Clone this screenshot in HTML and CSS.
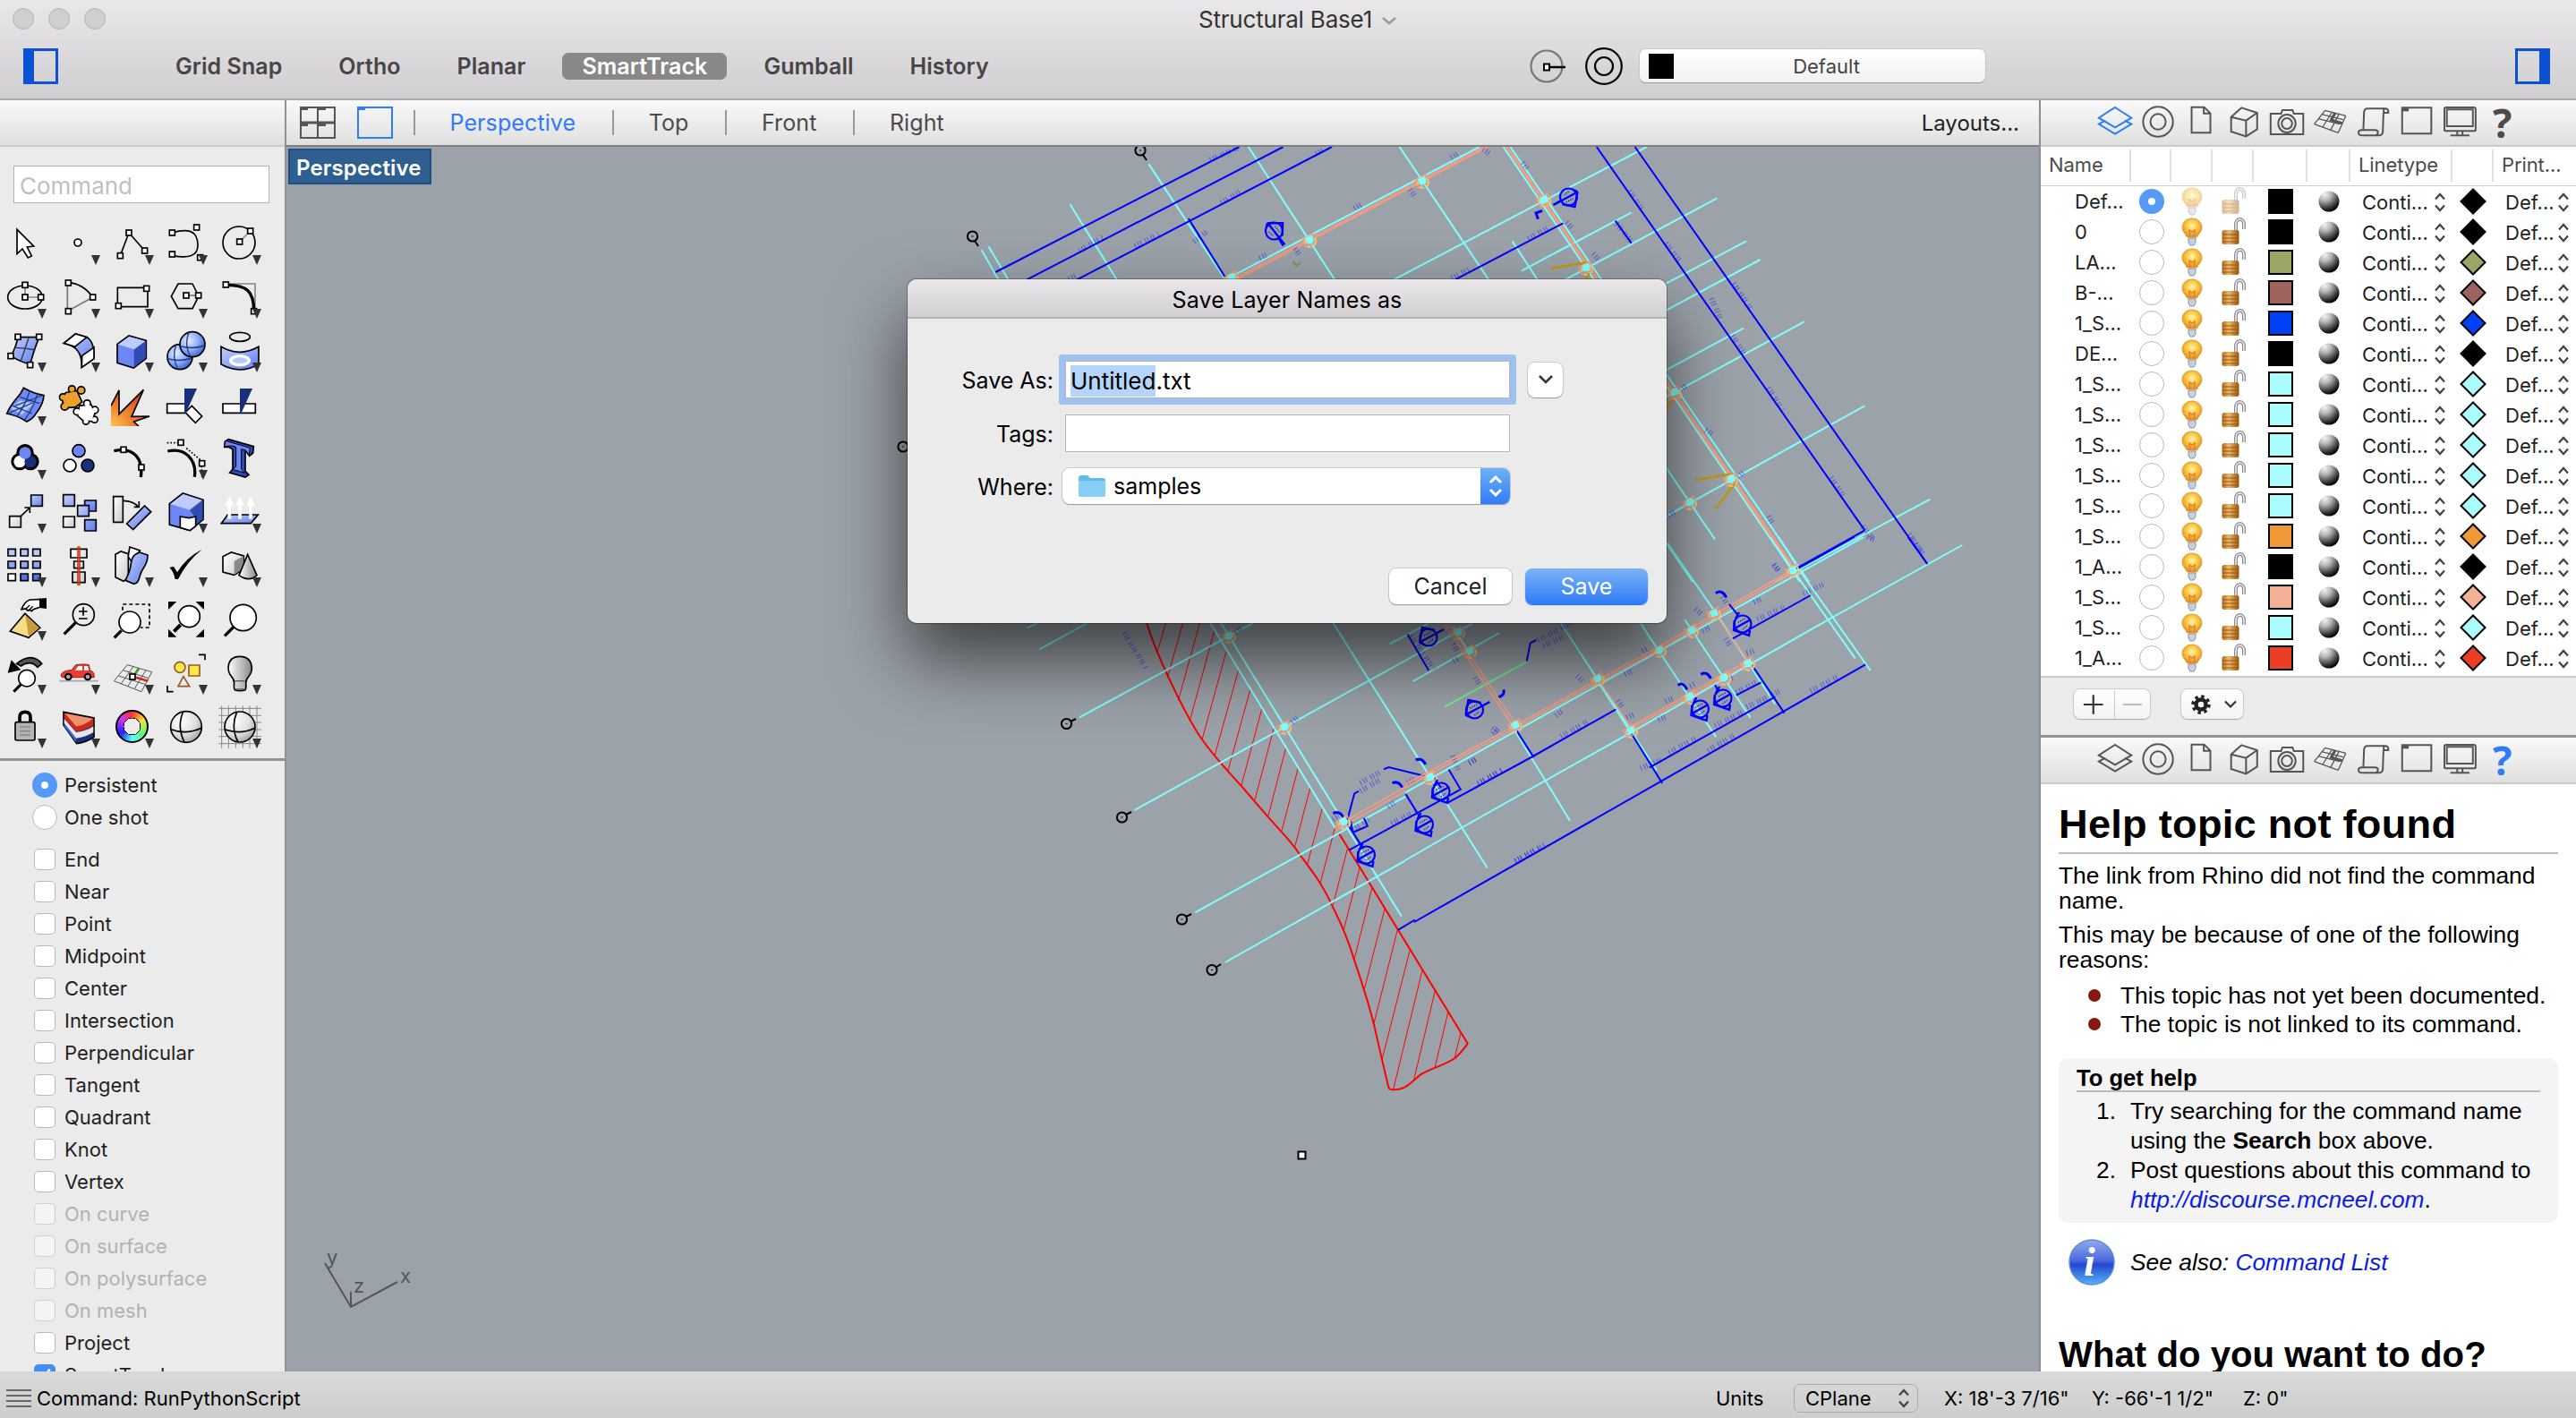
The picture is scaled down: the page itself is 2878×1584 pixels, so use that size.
FILE: index.html
```html
<!DOCTYPE html>
<html lang="en">
<head>
<meta charset="utf-8">
<title>Structural Base1</title>
<link rel="stylesheet" href="styles.css">
</head>
<body>
<svg class="defs" aria-hidden="true">
  <defs>
    <linearGradient id="gb" x1="0" y1="0" x2="1" y2="1"><stop offset="0" stop-color="#c3cffb"/><stop offset="1" stop-color="#5f7df0"/></linearGradient>
    <linearGradient id="gw" x1="0" y1="0" x2="1" y2="1"><stop offset="0" stop-color="#fff"/><stop offset="1" stop-color="#ccc"/></linearGradient>
    <linearGradient id="gd" x1="0" y1="0" x2="1" y2="0"><stop offset="0" stop-color="#fff"/><stop offset="1" stop-color="#888"/></linearGradient>
    <radialGradient id="sb" cx=".35" cy=".35" r=".75"><stop offset="0" stop-color="#e6eeff"/><stop offset=".5" stop-color="#8fb0fa"/><stop offset="1" stop-color="#3558c8"/></radialGradient>
    <radialGradient id="sg" cx=".35" cy=".3" r=".8"><stop offset="0" stop-color="#fff"/><stop offset=".6" stop-color="#ddd"/><stop offset="1" stop-color="#999"/></radialGradient>
    <radialGradient id="fire" cx="0" cy="1" r="1.1"><stop offset="0" stop-color="#fbc64a"/><stop offset=".5" stop-color="#f08232"/><stop offset="1" stop-color="#dc4a20"/></radialGradient>
    <radialGradient id="bulbg" cx=".5" cy=".4" r=".6"><stop offset="0" stop-color="#fff6b0"/><stop offset=".5" stop-color="#fbc840"/><stop offset="1" stop-color="#e08a20"/></radialGradient>
    <linearGradient id="lockg" x1="0" y1="0" x2="1" y2="0"><stop offset="0" stop-color="#b06a18"/><stop offset=".4" stop-color="#eebb6c"/><stop offset="1" stop-color="#9a5408"/></linearGradient>
    <radialGradient id="ballg" cx=".3" cy=".15" r=".9"><stop offset="0" stop-color="#f4f4f4"/><stop offset=".35" stop-color="#b4b4b4"/><stop offset=".7" stop-color="#4a4a4a"/><stop offset=".95" stop-color="#050505"/></radialGradient>
    <linearGradient id="infog" x1="0" y1="0" x2="0" y2="1"><stop offset="0" stop-color="#93a8ee"/><stop offset=".45" stop-color="#4c6ce0"/><stop offset=".55" stop-color="#2446d0"/><stop offset="1" stop-color="#55b4f6"/></linearGradient>
  </defs>
  <symbol id="n" overflow="visible"><rect x="-9" y="-9" width="18" height="18" fill="#fff" stroke="#000" stroke-width="5"/></symbol>
  <symbol id="bulb" viewBox="0 0 28 32"><path d="M14 1C7 1 3 6 3 11c0 5 4 7 5.500 11h11C21 18 25 16 25 11 25 6 21 1 14 1z" fill="url(#bulbg)" stroke="#e0a040"/><path d="M12 22l-1-8 3 2 3-2-1 8" fill="none" stroke="#e08030" stroke-width="1.500"/><path d="M10 23h8v5l-2 3h-4l-2-3z" fill="#c9d0da" stroke="#8a93a2"/></symbol>
  <symbol id="lock" viewBox="0 0 28 34"><path d="M17 17V9c0-8 9-8 9 0v5" fill="none" stroke="#8d8d8d" stroke-width="4"/><path d="M17 17V9c0-8 9-8 9 0v5" fill="none" stroke="#f2f2f2" stroke-width="1.500"/><rect x="1.500" y="15" width="19" height="16" rx="2.500" fill="url(#lockg)"/><path d="M2 20h18M2 24h18M2 28h18" stroke="#99560f" stroke-width="1"/></symbol>
  <symbol id="ball" viewBox="0 0 24 24"><circle cx="12" cy="12" r="11.500" fill="url(#ballg)"/></symbol>
  <symbol id="step" viewBox="0 0 14 22"><path d="M2 7.500L7 2l5 5.500M2 14.500L7 20l5-5.500" fill="none" stroke="#444" stroke-width="2.200"/></symbol>
  <symbol id="dia" viewBox="0 0 30 30"><path d="M15 1.500L28.500 15 15 28.500 1.500 15z" fill="var(--c)" stroke="#000" stroke-width="2"/></symbol>
  <symbol id="t-layers" viewBox="178 49 124 120" preserveAspectRatio="none"><path d="M240 61l47 35-47 32-47-32zM212 105l-19 12 47 33 47-33-19-12"/></symbol>
  <symbol id="t-mat" viewBox="302 49 124 120" preserveAspectRatio="none"><ellipse cx="364" cy="109" rx="43" ry="50"/><ellipse cx="364" cy="109" rx="22" ry="26"/></symbol>
  <symbol id="t-doc" viewBox="428 49 124 120" preserveAspectRatio="none"><path d="M463 60h36l18 21v65h-54zM498 60v21h19"/></symbol>
  <symbol id="t-cube" viewBox="547 49 124 120" preserveAspectRatio="none"><path d="M602 62l45 17v55l-32 24-43-16V93zM572 93l43 12 32-26M615 105v53"/></symbol>
  <symbol id="t-cam" viewBox="672 49 124 120" preserveAspectRatio="none"><path d="M687 82h30l4-12h29l4 12h27v69h-94z"/><ellipse cx="734" cy="115" rx="25" ry="30"/><ellipse cx="734" cy="115" rx="15" ry="18"/></symbol>
  <symbol id="t-grid" viewBox="800 49 124 120" preserveAspectRatio="none"><path stroke-width="1.300" d="M848 71l60 18M838 84l62 18M828 99l62 18M817 117l69 29M848 71l-31 46M868 77l-27 50M888 83l-24 54M908 89l-22 57"/><path stroke-width="3.200" d="M877 80l-11 23 31 11"/></symbol>
  <symbol id="t-scroll" viewBox="926 49 124 120" preserveAspectRatio="none"><path d="M958 137l2-60q1-12 10-12h52q9 1 8 14h-13q-2-10 2-13M1016 79l-2 66q-2 10-12 10h-46q-12 0-12-9t10-9h38q8 0 8 8t-6 10"/></symbol>
  <symbol id="t-win" viewBox="1045 49 124 120" preserveAspectRatio="none"><path d="M1065 62h84v87h-84z"/><path stroke-width="4" d="M1066 68h18"/></symbol>
  <symbol id="t-mon" viewBox="1170 49 124 120" preserveAspectRatio="none"><rect x="1188" y="61" width="90" height="79" rx="5"/><path d="M1195 68h75v56h-75zM1225 141v12M1240 141v12M1205 155h55"/></symbol>
  <symbol id="mark" overflow="visible"><circle r="9.500" fill="none" stroke="#00f" stroke-width="2.200"/><path d="M-10 6L-7-11 7-8M-9 5L17-9M-10 6l5 2" fill="none" stroke="#00f" stroke-width="2.400"/><path d="M-5-2L3-6M0 6l5-4" stroke="#00f" stroke-width="1.500" stroke-dasharray="1 1.500"/></symbol>
  <symbol id="markd" overflow="visible"><circle r="9.500" fill="none" stroke="#00f" stroke-width="2.200"/><path d="M-9-4L-10 7 7 13 8 7M-9 5L9-5M-8-6L-4-13" fill="none" stroke="#00f" stroke-width="2.400"/><path d="M-5-2L3-6M0 6l5-4" stroke="#00f" stroke-width="1.500" stroke-dasharray="1 1.500"/></symbol>
  <symbol id="bub" overflow="visible"><circle r="5.600" fill="none" stroke="#000" stroke-width="2"/><path d="M-1 0h2" stroke="#000"/></symbol>
  <symbol id="col" overflow="visible"><path d="M-8 0L4-7 8 2-4 8z" fill="none" stroke="#f99b7d" stroke-width="1.500"/><circle cx="1" cy="2" r="6" fill="none" stroke="#f0d070" stroke-width="1.500" stroke-dasharray="5 3"/><path d="M-5-2L3-5 5 2-2 5z" fill="#80ffff"/></symbol>
</svg>

<header class="titlebar">
  <div class="title-row">
    <div class="lights"><i></i><i></i><i></i></div>
    <div class="title">Structural Base1<svg width="18" height="10" viewBox="0 0 18 10"><path d="M2 2l7 6 7-6" fill="none" stroke="#999" stroke-width="2.500"/></svg></div>
  </div>
  <div class="tool-row">
    <i class="side-ico at-left"></i>
    <nav class="modes"><span>Grid Snap</span><span>Ortho</span><span>Planar</span><span class="on">SmartTrack</span><span>Gumball</span><span>History</span></nav>
    <div class="layer-pick">
      <svg width="42" height="42" viewBox="0 0 42 42" fill="none"><circle cx="19" cy="21" r="17.500" stroke="#777" stroke-width="2.200"/><path d="M22 22h18" stroke="#000" stroke-width="2.500"/><rect x="16" y="18.500" width="6" height="7" fill="#fff" stroke="#000" stroke-width="2"/></svg>
      <svg width="42" height="42" viewBox="0 0 42 42" fill="none" stroke="#000" stroke-width="2.200"><circle cx="21" cy="21" r="19.800"/><circle cx="21" cy="21" r="10"/></svg>
      <div class="pick"><i></i><span>Default</span></div>
    </div>
    <i class="side-ico at-right"></i>
  </div>
</header>

<main>
  <aside class="panel-left">
    <div class="strip"></div>
    <div class="cmd">Command</div>
    <div class="tools">
      <div class="tool"><svg viewBox="12 264 144 144"><path fill="#fff" d="M57 289v82l18-17 19 30 12-6-15-30 22-3z"/></svg></div>
      <div class="tool m"><svg viewBox="192 264 144 144"><circle cx="261" cy="333" r="12" fill="#fff"/></svg></div>
      <div class="tool m"><svg viewBox="372 264 144 144"><path d="M403 377l29-77 53 60"/><use href="#n" x="403" y="377"/><use href="#n" x="432" y="300"/><use href="#n" x="485" y="360"/></svg></div>
      <div class="tool m"><svg viewBox="552 264 144 144"><path d="M577 300c50-15 86-10 86 42 0 35-30 46-86 34"/><use href="#n" x="577" y="300"/><use href="#n" x="659" y="282"/><use href="#n" x="577" y="372"/><use href="#n" x="671" y="383"/></svg></div>
      <div class="tool m"><svg viewBox="732 264 144 144"><circle cx="801" cy="333" r="54"/><path stroke="#888" d="M803 330l36-36"/><use href="#n" x="803" y="330"/><use href="#n" x="839" y="294"/></svg></div>

      <div class="tool m"><svg viewBox="12 444 144 144"><ellipse cx="84" cy="516" rx="58" ry="39"/><path stroke="#888" d="M84 475v41h53"/><use href="#n" x="84" y="475"/><use href="#n" x="84" y="516"/><use href="#n" x="137" y="516"/></svg></div>
      <div class="tool m"><svg viewBox="192 444 144 144"><path stroke="#777" d="M226 468v95l85-47"/><path d="M229 467q50 4 82 49"/><use href="#n" x="229" y="468"/><use href="#n" x="311" y="516"/><use href="#n" x="229" y="563"/></svg></div>
      <div class="tool m"><svg viewBox="372 444 144 144"><path d="M394 484h101v64H394z"/><use href="#n" x="491" y="487"/><use href="#n" x="397" y="545"/></svg></div>
      <div class="tool m"><svg viewBox="552 444 144 144"><path d="M597 471h48l21 42-21 41h-48l-23-41z"/><path stroke="#777" d="M624 510h40"/><use href="#n" x="624" y="510"/><use href="#n" x="665" y="510"/></svg></div>
      <div class="tool m"><svg viewBox="732 444 144 144"><path stroke="#888" d="M757 471h98v92"/><path stroke-width="10" d="M757 475c70 0 94 20 94 88"/><use href="#n" x="757" y="474"/><use href="#n" x="851" y="563"/></svg></div>

      <div class="tool m"><svg viewBox="12 624 144 144"><path fill="url(#gb)" d="M60 650h71q-18 45-30 90-30-5-64-27 18-33 23-63z"/><path stroke="#334" stroke-width="4" d="M97 650q-14 40-27 80M50 685q35 0 68 8"/><use href="#n" x="60" y="649"/><use href="#n" x="131" y="649"/><use href="#n" x="36" y="713"/><use href="#n" x="101" y="743"/></svg></div>
      <div class="tool m"><svg viewBox="192 624 144 144"><path fill="url(#gb)" d="M214 670l39-31 38 11q26 14 24 72l-41 29q3-70-60-81z"/><path fill="#fff" d="M214 670l39-31 38 11-40 32zM275 712l40-28v38l-41 29z"/></svg></div>
      <div class="tool m"><svg viewBox="372 624 144 144"><path fill="#6b87f5" d="M393 673l39-28 58 16v60l-42 32-55-17z"/><path stroke="none" fill="#bfcbfb" d="M396 674l37-26 54 15-38 28z"/><path stroke="none" fill="#2f4cb4" d="M449 692l39-29v56l-39 31z"/></svg></div>
      <div class="tool m"><svg viewBox="552 624 144 144"><circle cx="603" cy="716" r="42" fill="url(#sb)"/><path stroke="#223a80" stroke-width="4" d="M590 676q-14 40 5 80M562 722q40 12 80-2"/><circle cx="645" cy="674" r="42" fill="url(#sb)"/><path stroke="#223a80" stroke-width="4" d="M633 634q-16 40 4 80M604 680q40 12 82-2"/></svg></div>
      <div class="tool m"><svg viewBox="732 624 144 144"><ellipse cx="804" cy="649" rx="34" ry="15"/><path fill="url(#gb)" d="M741 682q62 36 126 0v58q-64 38-126 0z"/><ellipse cx="804" cy="728" rx="31" ry="15" fill="#b9c8fb" stroke="#fff" stroke-width="10"/></svg></div>

      <div class="tool m"><svg viewBox="12 804 144 144"><path fill="#6f8cf5" d="M79 820q34 20 68 25-2 30-26 60-10 18-31 28-34-22-67-27 8-20 30-48 18-18 26-38z"/><path stroke="none" fill="#b4c5fb" d="M66 862l48 10-40 38-38-22z"/><path stroke="#233a80" stroke-width="4" d="M66 850l66 22M42 880l66 26M100 828q-14 50-44 88M126 838q-14 50-44 90M50 880l90-34M30 904l80-34"/></svg></div>
      <div class="tool"><svg viewBox="192 804 144 144">
        <g stroke-width="10"><path d="M222 838l34-6 16 34-20 16-34 2-8-28z"/><circle cx="241" cy="824" r="9"/><circle cx="272" cy="828" r="10"/><circle cx="211" cy="851" r="9"/><circle cx="217" cy="882" r="10"/></g>
        <g stroke="none" fill="#eda02c"><path d="M222 838l34-6 16 34-20 16-34 2-8-28z"/><circle cx="241" cy="824" r="9"/><circle cx="272" cy="828" r="10"/><circle cx="211" cy="851" r="9"/><circle cx="217" cy="882" r="10"/></g>
        <g stroke-width="10"><path d="M268 882l36-4 12 24-8 28-30-4-16-14z"/><circle cx="292" cy="872" r="9"/><circle cx="318" cy="894" r="9"/><circle cx="317" cy="926" r="8"/><circle cx="288" cy="932" r="8"/><circle cx="258" cy="899" r="9"/></g>
        <g stroke="none" fill="#fff"><path d="M268 882l36-4 12 24-8 28-30-4-16-14z"/><circle cx="292" cy="872" r="9"/><circle cx="318" cy="894" r="9"/><circle cx="317" cy="926" r="8"/><circle cx="288" cy="932" r="8"/><circle cx="258" cy="899" r="9"/></g></svg></div>
      <div class="tool"><svg viewBox="372 804 144 144"><path fill="url(#fire)" stroke="none" d="M372 948v-70l27-50v80l82-82-40 90 60-1-50 19 14 14z"/><path d="M372 880l27-52v80l82-82-40 90 60-1-52 18 16 16"/></svg></div>
      <div class="tool"><svg viewBox="552 804 144 144"><path fill="#fff" d="M560 873h62v31h-62zM643 880l34 35-22 22-34-35z"/><path fill="#18307c" stroke="none" d="M618 822h42l-38 84h-4z"/></svg></div>
      <div class="tool"><svg viewBox="732 804 144 144"><path fill="#fff" d="M747 873h109v31H747z"/><path fill="#18307c" stroke="none" d="M804 822h42l-38 84h-4z"/></svg></div>

      <div class="tool m"><svg viewBox="12 -6 144 144"><g stroke-width="14"><circle cx="84" cy="47" r="22"/><circle cx="66" cy="77" r="22"/><circle cx="102" cy="77" r="22"/></g><g stroke="none"><circle cx="66" cy="77" r="20" fill="#fff"/><circle cx="102" cy="77" r="20" fill="#18307c"/><circle cx="84" cy="48" r="20" fill="#6b87f5"/></g></svg></div>
      <div class="tool"><svg viewBox="192 -6 144 144"><circle cx="264" cy="41" r="21" fill="#6b87f5"/><circle cx="234" cy="90" r="21" fill="#fff"/><circle cx="294" cy="90" r="21" fill="#18307c"/></svg></div>
      <div class="tool"><svg viewBox="372 -6 144 144"><path stroke-width="10" d="M382 41c70-15 98 30 90 88"/><use href="#n" x="414" y="37"/><use href="#n" x="474" y="96"/></svg></div>
      <div class="tool m"><svg viewBox="552 -6 144 144"><path stroke-width="10" d="M562 42c60-14 98 30 90 86"/><path stroke-dasharray="5 6" d="M560 14h35M625 32l50 42M676 92v36"/><use href="#n" x="606" y="13"/><use href="#n" x="677" y="83"/></svg></div>
      <div class="tool"><svg viewBox="732 -6 144 144"><path fill="#2f4cb4" d="M752 28l2-18 12-8 84 24-2 22-12 10-10-14-4-1v66l12 12-12 8-52-15 10-12V36l-14-8z"/><path fill="#6b87f5" stroke-width="3" d="M752 26l4-19 82 24-3 24-12-16-14-4v68l12 12-42-12 12-9V28l-14-4z"/></svg></div>

      <div class="tool m"><svg viewBox="12 174 144 144"><path fill="url(#gw)" d="M32 260h38v37H32z"/><path fill="url(#gb)" d="M104 189h38v37h-38z"/><path d="M70 260l30-29M82 231h18v18"/></svg></div>
      <div class="tool"><svg viewBox="192 174 144 144"><path fill="url(#gb)" d="M212 188h38v38h-38zM284 207h38v36h-38z"/><path fill="url(#gb)" d="M260 224h38v36h-38zM284 272h38v37h-38z"/><path fill="url(#gw)" d="M212 261h38v36h-38z"/></svg></div>
      <div class="tool"><svg viewBox="372 174 144 144"><path fill="url(#gw)" d="M380 194h32v86h-32z"/><path fill="url(#gb)" d="M485 225l21 20-60 60-21-20z"/><path d="M412 208q36 0 53 22M449 229h17v-19"/></svg></div>
      <div class="tool m"><svg viewBox="552 174 144 144"><path fill="#6b87f5" d="M568 218l45-35 68 22v66l-44 37-69-20z"/><path stroke="none" fill="#bfcbfb" d="M571 219l43-33 63 20-42 33z"/><path stroke="none" fill="#2f4cb4" d="M636 240l43-34v63l-23 18v-22z"/><path fill="#fff" d="M604 261l30 5 22-5v32l-20 15-32-10z"/></svg></div>
      <div class="tool m"><svg viewBox="732 174 144 144"><path fill="url(#gb)" d="M763 255h102l-24 29H742z"/><path stroke="#fff" stroke-width="11" d="M769 269v-50M804 269v-50M840 269v-50"/><path stroke="none" fill="#fff" d="M754 224l15-31 15 31zM789 224l15-31 15 31zM825 224l15-31 15 31z"/></svg></div>

      <div class="tool m"><svg viewBox="12 354 144 144"><path fill="#b9c6fb" d="M27 370h25v23H27zM69 370h25v23H69zM110 370h25v23h-25z"/><path fill="#8fa6f8" d="M27 411h25v23H27zM69 411h25v23H69zM110 411h25v23h-25z"/><path fill="#fff" d="M27 453h25v23H27z"/><path fill="#5573e8" d="M69 453h25v23H69zM110 453h25v23h-25z"/></svg></div>
      <div class="tool m"><svg viewBox="192 354 144 144"><path fill="url(#gw)" d="M237 370h54v29h-54zM248 411h32v23h-32zM243 447h42v35h-42z"/><path stroke="#c8341f" stroke-opacity=".8" stroke-width="12" d="M264 361v131"/></svg></div>
      <div class="tool m"><svg viewBox="372 354 144 144"><path fill="#fff" d="M435 363l34 12-26 40-14-20z"/><path fill="url(#gw)" d="M387 388l18-10 25 8v80l-16 12-27-14z"/><path fill="url(#gb)" d="M468 381l27 9c0 40-20 40-26 70-6 24-12 24-20 27l-29-12c10-20 16-30 18-50 4-30 10-36 30-44z"/></svg></div>
      <div class="tool m"><svg viewBox="552 354 144 144"><path fill="#000" stroke="none" d="M568 432l14-4 12 20q30-50 83-77-50 40-80 100h-10q-6-28-19-39z"/></svg></div>
      <div class="tool m"><svg viewBox="732 354 144 144"><path fill="url(#gw)" d="M747 395l28-14 42 12v44l-32 20-38-10z"/><path stroke="none" fill="#8a8a8a" d="M785 410l30-16v42l-30 20z"/><path fill="url(#gd)" d="M830 388l31 70q-26 24-60 0z"/></svg></div>

      <div class="tool m"><svg viewBox="12 534 144 144"><path fill="#f6dc84" d="M84 586l50 48-38 33-62-22z"/><path fill="#c79a3a" stroke="none" d="M85 590l47 44-36 30z"/><path fill="#fff" d="M72 572q10-26 28-32l36-2v26l-24 8-6 6-6-4-8 2-4-6z"/><path stroke-width="4" d="M84 572l16-14M96 576l14-14"/><path fill="#000" stroke="none" d="M132 536l24-2v36l-24-3z"/></svg></div>
      <div class="tool"><svg viewBox="192 534 144 144"><path stroke-width="10" d="M215 655l38-38"/><circle cx="280" cy="590" r="36"/><path d="M264 579h29M279 565v28M264 603h29"/></svg></div>
      <div class="tool"><svg viewBox="372 534 144 144"><path stroke-dasharray="12 9" d="M411 575v-20h90v78h-30"/><path stroke-width="10" d="M383 667l24-24"/><circle cx="435" cy="615" r="36" fill="#fff"/></svg></div>
      <div class="tool"><svg viewBox="552 534 144 144"><path stroke-width="12" d="M583 646l22-22"/><circle cx="634" cy="596" r="36" fill="#fff"/><path fill="#000" stroke="none" d="M564 546h28l-28 27zM684 546h-28l28 27zM564 665h28l-28-27zM684 665h-28l28-27z"/></svg></div>
      <div class="tool"><svg viewBox="732 534 144 144"><path stroke-width="10" d="M753 661l32-32"/><circle cx="815" cy="600" r="44" fill="#fff"/></svg></div>

      <div class="tool m"><svg viewBox="12 714 144 144"><path stroke-width="9" d="M46 848l24-24"/><circle cx="90" cy="803" r="28" fill="#fff"/><path fill="#555" d="M56 754q50-40 84 0l-14 12q-24-26-56-4z"/><path fill="#000" stroke="none" d="M38 742l-12 43 44-10z"/></svg></div>
      <div class="tool m"><svg viewBox="192 714 144 144"><path stroke="#aaa" d="M199 812h130"/><path fill="#e83c34" stroke="#a01a18" stroke-width="3" d="M206 788q10-12 34-12l14-18q30-4 44 0l4 20q14 0 14 22h-108q-6-4-2-12z"/><path fill="#fff" stroke="none" d="M252 776l10-14h14v14zM282 762h12l4 14h-16z"/><circle cx="229" cy="798" r="10" fill="#aaa" stroke-width="6"/><circle cx="294" cy="798" r="10" fill="#aaa" stroke-width="6"/></svg></div>
      <div class="tool m"><svg viewBox="372 714 144 144"><g stroke="#555" stroke-width="3"><path d="M427 758l82 24M412 776l84 26M397 795l88 28M382 812l92 36M427 758l-45 54M447 764l-42 58M468 770l-40 60M489 776l-38 62M509 782l-35 66"/></g><path stroke="#4a9a2a" stroke-width="8" d="M452 790l14-22"/><path stroke="#d02820" stroke-width="8" d="M456 800l40 12"/><use href="#n" x="444" y="798"/></svg></div>
      <div class="tool m"><svg viewBox="552 714 144 144"><path d="M666 724h21v18M561 828v20h20"/><g stroke="#9a5a20"><circle cx="603" cy="766" r="18" fill="#fde84a"/><path fill="#fde84a" d="M633 759h36v36h-36z"/><path d="M615 797l20 33h-38z"/></g></svg></div>
      <div class="tool m"><svg viewBox="732 714 144 144"><path fill="url(#gd)" d="M787 842q-4-6-2-22 0-14-10-24-10-12-10-28 2-38 39-38t40 38q0 16-10 28-10 10-10 24 2 16-2 22-18 6-35 0z"/><path stroke="#555" stroke-width="4" d="M786 812h34M790 840h28"/></svg></div>

      <div class="tool m"><svg viewBox="12 894 144 144"><path stroke-width="11" d="M66 952v-18q0-18 18-18t18 18v18"/><rect x="51" y="950" width="66" height="61" rx="5" fill="#b5b5b5"/><path stroke="#888" d="M66 966h36M66 980h36M66 993h36"/></svg></div>
      <div class="tool m"><svg viewBox="192 894 144 144"><path fill="#1a2f80" d="M213 916l102 20v64q-26 18-58 22l-44-62z"/><path fill="#e6e6e6" stroke="none" d="M215 938l40 46q36-4 58-20v20q-24 16-58 20l-40-50z"/><path fill="#cc2a1a" stroke="none" d="M215 920l98 18v22q-24 18-58 22l-40-46z"/><path fill="#f0926c" stroke="none" d="M217 920l94 18q-26 22-56 26z"/><path fill="#3c66e0" stroke="none" d="M215 954v10l40 54v-14z"/></svg></div>
      <div class="tool m"><i class="wheel"></i></div>
      <div class="tool"><svg viewBox="552 894 144 144"><circle cx="624" cy="966" r="52" fill="url(#sg)"/><path d="M614 915q-22 50 4 102M573 974q50 20 102-4"/></svg></div>
      <div class="tool m"><svg viewBox="732 894 144 144"><path stroke="#888" stroke-width="3" d="M733 904h143M733 928h143M733 951h143M733 975h143M733 998h143M733 1022h143M743 895v142M766 895v142M790 895v142M814 895v142M837 895v142M861 895v142"/><circle cx="804" cy="966" r="51" fill="url(#sg)"/><path d="M794 916q-22 50 4 101M754 974q50 20 101-4"/></svg></div>
    </div>
    <div class="osnap">
      <label><i class="radio on"></i>Persistent</label>
      <label><i class="radio"></i>One shot</label>
      <div class="checks">
        <label><i class="box"></i>End</label><label><i class="box"></i>Near</label><label><i class="box"></i>Point</label><label><i class="box"></i>Midpoint</label><label><i class="box"></i>Center</label><label><i class="box"></i>Intersection</label><label><i class="box"></i>Perpendicular</label><label><i class="box"></i>Tangent</label><label><i class="box"></i>Quadrant</label><label><i class="box"></i>Knot</label><label><i class="box"></i>Vertex</label>
        <label class="off"><i class="box"></i>On curve</label><label class="off"><i class="box"></i>On surface</label><label class="off"><i class="box"></i>On polysurface</label><label class="off"><i class="box"></i>On mesh</label>
        <label><i class="box"></i>Project</label><label><i class="box checked"><svg viewBox="0 0 24 24"><path d="M6 13l4 5 8-13" fill="none" stroke="#fff" stroke-width="3"/></svg></i>SmartTrack</label>
      </div>
    </div>
  </aside>

  <section class="center">
    <div class="strip views">
      <svg class="v4" width="40" height="36" viewBox="0 0 40 36" fill="none" stroke="#555" stroke-width="2"><path d="M1 1h38v34H1zM20 1v34"/><path stroke-width="3" d="M1 18h38"/><path stroke-width="4" d="M1 2h8M20 2h9M1 20h8M20 20h9"/></svg>
      <svg class="v1" width="40" height="36" viewBox="0 0 40 36" fill="none" stroke="#2f7cf6" stroke-width="2"><path d="M1 1h38v34H1z"/><path stroke-width="4" d="M1 2h8"/></svg>
      <span class="on">Perspective</span><span>Top</span><span>Front</span><span>Right</span>
      <b>Layouts...</b>
    </div>
    <div class="viewport">
      <svg class="drawing" viewBox="320 164 1958 1368">
        <g transform="translate(980 150) scale(.77808 .33333)">
          <path class="cy" d="M500 487L865 42M742 487L1105 42M925 458L1083 262M988 487L1206 214M1133 500L1248 358M1133 590L1268 420M1133 790L1244 650M1133 880L1331 628M1133 1280L1418 910M1290 1500L1512 1223M390 100L500 487M533 42L657 487M277 235L344 487M150 388L174 487M160 376L188 487M750 42L878 487M912 358L948 487M899 42L1325 1500M909 42L1338 1500M1133 1118L1203 1358M1133 1370L1171 1500"/>
          <path class="or" d="M506 492L872 42M512 492L877 42M903 42L1316 1460M905 42L1319 1460M1290 1500L1316 1467"/>
          <path class="bl" d="M170 462L520 42M215 487L583 42M287 487L653 42M830 487L985 298M1320 1455L1418 1327M1033 42L1418 1327M1088 42L1508 1440M447 282L500 480M1060 290L1083 365M576 348L583 374M971 236L982 222"/>
          <path class="bk" d="M955 256L946 264 949 284"/>
          <path class="tx" d="M478 85L518 46M494 230L522 190M290 390L324 345M370 375L404 335M630 65L645 48M824 78L836 62M870 50L882 68M765 185L772 208M685 248L698 232M549 415L562 400M600 382L608 408M455 360L474 325M927 95L935 118M935 350L965 312M1080 190L1098 250M1133 365L1154 430M1198 550L1213 630M1228 675L1245 735M1280 850L1300 925M1230 500L1256 590M1370 1150L1388 1215M1482 1340L1502 1410M1190 990L1202 1010M1280 1280L1288 1310M1415 1315L1432 1360M990 295L1000 320M1028 400L1036 420M1136 1280L1148 1260M1288 1440L1296 1475M1062 300L1083 360M825 482L850 452M275 485L288 470M1236 1150L1247 1125M1153 860L1162 840"/>
          <path class="go" d="M968 450L1018 430M1018 487L1022 465M1175 1158L1228 1138M1235 1160L1204 1255M1148 870L1133 920"/>
          <path class="ol" d="M597 426l5 14 6-10"/>
        </g>
        <g transform="translate(1100 680) scale(.39541 .35714)">
          <path class="ht" d="M512 45L488 135M560 45L517 215M608 45L547 288M649 70L580 350M683 133L615 408M717 193L650 460M750 255L687 510M783 315L725 555M817 375L763 600M851 437L801 650M886 498L840 693M920 560L876 748M955 622L912 800M990 685L948 860M1025 752L985 925M1060 810L1015 1003M1095 872L1045 1095M1131 937L1073 1190M1167 1003L1100 1297M1202 1067L1123 1410M1237 1130L1155 1503M1273 1195L1213 1473M1310 1260L1272 1437M1346 1325L1328 1405"/>
          <path class="rd" d="M458 45C480 120 505 180 520 215 545 275 570 330 600 385 640 455 690 510 730 560L800 650C840 700 865 725 890 768 940 840 960 875 985 935 1010 990 1030 1045 1045 1100 1065 1165 1085 1235 1100 1300L1125 1420 1141 1495Q1142 1504 1152 1504C1195 1506 1205 1478 1235 1455 1270 1433 1300 1428 1330 1405 1350 1385 1355 1375 1365 1360L1000 700"/>
          <path class="cy" d="M120 60L150 45M155 127L290 45M268 340L758 45M424 630L1380 45M595 950L1190 587M680 1106L1190 787M1210 227L1455 75M1145 110L1255 45M638 45L990 685M668 45L1178 962M985 45L1420 810"/>
          <path class="or" d="M990 682L1190 557M997 690L1190 569M990 682L997 695"/>
          <path class="gr" d="M1300 307L1530 167"/>
          <path class="bl" d="M1030 755L1345 565 1310 500M1195 80L1255 193M1025 660L1045 578 1057 571M1128 502L1142 496 1250 525M1190 580L1232 655M1025 672L1070 750M1168 1005L1216 973M1040 700L1082 680 1072 655M1035 665L1040 700M1265 520L1290 560"/>
          <path class="bk" d="M1452 277q20-8 14-24M985 640q18-10 28 12M1152 545q18-8 28 14M1218 473q18-8 28 14"/>
          <path class="tx" d="M395 75L455 185M708 75L730 55M868 355L888 335M1062 545L1118 510M1062 570L1118 535M1205 85L1270 190M1325 110L1335 130M1385 215L1400 240M1435 390L1458 365M1322 460L1340 505M1370 485L1395 465M1395 548L1462 503M1150 672L1220 632M1140 620L1162 602M1195 545L1220 530M1500 790L1568 748M985 660L1010 640M1040 690L1085 660M1325 165L1340 155"/>
        </g>
        <g transform="translate(1580 600) scale(.39541 .33333)">
          <path class="cy" d="M-25 856L1270 0M-25 1083L137 972 612 655 943 430 1180 270 1548 27M285 650L440 950M415 290L520 480 685 782M522 490L612 655M640 290L853 670M765 277L950 605M715 20L850 250 1020 560M1005 0L1070 110 1246 406M1030 0L1085 105 1289 447M110 300L160 400"/>
          <path class="or" d="M-25 828L285 632 520 477 690 368 1070 108M-25 839L285 641 520 486 690 378 1070 118M85 290L280 635M97 290L290 632M525 485L612 635 943 415 852 260M612 643L943 425M1015 0L1072 105"/>
          <path class="bl" d="M0 1290L698 818 1045 583 1275 427M665 772L1020 535M95 890L335 735 570 577M900 340L1120 195M1085 105L1243 0M1395 0L1450 90M612 655L701 825M955 430L1046 590M290 650L338 738M910 530L980 487M318 415L328 355 345 345M890 225L915 262M780 525L795 550M850 495L858 515"/>
          <path class="bk" d="M852 188q18-14 30 14M745 497q14-14 26 14M810 460q18-12 28 14"/>
          <path class="tx" d="M350 345L440 290M365 365L420 335M415 668L490 618M180 825L250 780M285 1085L370 1030M830 715L905 665M1120 515L1195 470M720 722L795 675M850 632L925 588M940 570L1035 515M970 275L1045 235M960 218L988 203M1100 190L1155 160M1015 95L1038 118M795 240L815 262M460 465L482 490M400 598L425 578M220 640L242 660M155 755L180 740M645 382L660 372M595 460L622 445M815 315L838 300M880 340L895 368M870 200L885 225M710 550L740 535M690 612L718 598M880 480L905 468M910 520L975 482M575 548L592 575M600 605L620 595M640 775L700 745M780 500L795 490M1280 0L1305 10M1405 5L1438 55M940 390L960 380"/>
        </g>
        <g><use href="#col" x="1373" y="710"/><use href="#col" x="1435" y="812"/><use href="#col" x="1501" y="918"/><use href="#col" x="1598" y="868"/><use href="#col" x="1693" y="810"/><use href="#col" x="1629" y="706"/><use href="#col" x="1642" y="727"/><use href="#col" x="1785" y="758"/><use href="#col" x="1854" y="726"/><use href="#col" x="1890" y="704"/><use href="#col" x="1915" y="685"/><use href="#col" x="2003" y="637"/><use href="#col" x="1953" y="741"/><use href="#col" x="1926" y="757"/><use href="#col" x="1888" y="778"/><use href="#col" x="1822" y="816"/><use href="#col" x="1589" y="202"/><use href="#col" x="1463" y="268"/><use href="#col" x="1376" y="310"/><use href="#col" x="1725" y="223"/><use href="#col" x="1772" y="299"/><use href="#col" x="1871" y="438"/><use href="#col" x="1934" y="535"/><use href="#col" x="1888" y="561"/></g>
        <g><use href="#mark" x="1596" y="712"/><use href="#mark" x="1647.500" y="793"/><use href="#markd" x="1610" y="884"/><use href="#markd" x="1591.500" y="921"/><use href="#markd" x="1526.500" y="955"/><use href="#markd" x="1899.500" y="792"/><use href="#markd" x="1925" y="780"/><use href="#markd" x="1947" y="697"/><use href="#mark" transform="translate(1423.500 258) rotate(80)"/><use href="#mark" transform="translate(1752.500 220) rotate(180)"/></g>
        <g><use href="#bub" x="1191.500" y="808.500"/><use href="#bub" x="1253.500" y="913"/><use href="#bub" x="1320.500" y="1027"/><use href="#bub" x="1354" y="1083.500"/><use href="#bub" x="1274" y="168"/><use href="#bub" x="1086.500" y="264"/><use href="#bub" x="1009" y="499"/></g>
        <path fill="none" stroke="#000" stroke-width="2" d="M1196 806l6-3M1258 910l6-3M1325 1024l6-3M1358 1081l6-4M1277 173l4 6M1089 269l4 6"/>
        <g fill="none" stroke="#555" stroke-width="2"><path d="M363 1411L392 1460 444 1432M392 1460v-17"/></g>
        <g class="ax"><text x="365" y="1412">y</text><text x="395" y="1444">z</text><text x="447" y="1433">x</text></g>
        <rect x="1450.500" y="1286.500" width="8" height="8" fill="#fff" stroke="#000" stroke-width="2"/>
      </svg>
      <div class="vp-label">Perspective</div>

      <div class="dialog">
        <div class="dlg-title">Save Layer Names as</div>
        <div class="dlg-form">
          <span>Save As:</span><div class="field focus"><mark>Untitled</mark>.txt</div>
          <div class="disclose"><svg width="18" height="12" viewBox="0 0 18 12"><path d="M2 2l7 7 7-7" fill="none" stroke="#333" stroke-width="2.500"/></svg></div>
          <span>Tags:</span><div class="field"></div><div></div>
          <span>Where:</span><div class="popup"><svg width="32" height="26" viewBox="0 0 32 26"><path d="M1 4q0-3 3-3h7l3 3h14q3 0 3 3v16q0 2-2 2H3q-2 0-2-2z" fill="#64b8ea"/><path d="M1 7h30v16q0 2-2 2H3q-2 0-2-2z" fill="#88cff6"/></svg>samples<i><svg width="18" height="26" viewBox="0 0 18 26"><path d="M3 9l6-6 6 6M3 17l6 6 6-6" fill="none" stroke="#fff" stroke-width="3"/></svg></i></div><div></div>
        </div>
        <div class="dlg-btns"><button>Cancel</button><button class="pri">Save</button></div>
      </div>
    </div>
  </section>

  <aside class="panel-right">
    <div class="strip tabs"><svg class="on"><use href="#t-layers"/></svg><svg><use href="#t-mat"/></svg><svg><use href="#t-doc"/></svg><svg><use href="#t-cube"/></svg><svg><use href="#t-cam"/></svg><svg><use href="#t-grid"/></svg><svg><use href="#t-scroll"/></svg><svg><use href="#t-win"/></svg><svg><use href="#t-mon"/></svg><b>?</b></div>
    <div class="thead"><span>Name</span><span></span><span></span><span></span><span></span><span></span><span>Linetype</span><span></span><span>Print...</span></div>
    <div class="rows">
      <div class="row first" style="--c:#000"><span>Def...</span><i class="radio on"></i><svg class="bulb"><use href="#bulb"/></svg><svg class="lock"><use href="#lock"/></svg><i class="sw"></i><svg class="ball"><use href="#ball"/></svg><em>Conti...<svg><use href="#step"/></svg></em><svg class="dia"><use href="#dia"/></svg><em>Def...<svg><use href="#step"/></svg></em></div>
      <div class="row" style="--c:#000"><span>0</span><i class="radio"></i><svg class="bulb"><use href="#bulb"/></svg><svg class="lock"><use href="#lock"/></svg><i class="sw"></i><svg class="ball"><use href="#ball"/></svg><em>Conti...<svg><use href="#step"/></svg></em><svg class="dia"><use href="#dia"/></svg><em>Def...<svg><use href="#step"/></svg></em></div>
      <div class="row" style="--c:#9ba565"><span>LA...</span><i class="radio"></i><svg class="bulb"><use href="#bulb"/></svg><svg class="lock"><use href="#lock"/></svg><i class="sw"></i><svg class="ball"><use href="#ball"/></svg><em>Conti...<svg><use href="#step"/></svg></em><svg class="dia"><use href="#dia"/></svg><em>Def...<svg><use href="#step"/></svg></em></div>
      <div class="row" style="--c:#9f635e"><span>B-...</span><i class="radio"></i><svg class="bulb"><use href="#bulb"/></svg><svg class="lock"><use href="#lock"/></svg><i class="sw"></i><svg class="ball"><use href="#ball"/></svg><em>Conti...<svg><use href="#step"/></svg></em><svg class="dia"><use href="#dia"/></svg><em>Def...<svg><use href="#step"/></svg></em></div>
      <div class="row" style="--c:#0041f5"><span>1_S...</span><i class="radio"></i><svg class="bulb"><use href="#bulb"/></svg><svg class="lock"><use href="#lock"/></svg><i class="sw"></i><svg class="ball"><use href="#ball"/></svg><em>Conti...<svg><use href="#step"/></svg></em><svg class="dia"><use href="#dia"/></svg><em>Def...<svg><use href="#step"/></svg></em></div>
      <div class="row" style="--c:#000"><span>DE...</span><i class="radio"></i><svg class="bulb"><use href="#bulb"/></svg><svg class="lock"><use href="#lock"/></svg><i class="sw"></i><svg class="ball"><use href="#ball"/></svg><em>Conti...<svg><use href="#step"/></svg></em><svg class="dia"><use href="#dia"/></svg><em>Def...<svg><use href="#step"/></svg></em></div>
      <div class="row" style="--c:#aafdff"><span>1_S...</span><i class="radio"></i><svg class="bulb"><use href="#bulb"/></svg><svg class="lock"><use href="#lock"/></svg><i class="sw"></i><svg class="ball"><use href="#ball"/></svg><em>Conti...<svg><use href="#step"/></svg></em><svg class="dia"><use href="#dia"/></svg><em>Def...<svg><use href="#step"/></svg></em></div>
      <div class="row" style="--c:#aafdff"><span>1_S...</span><i class="radio"></i><svg class="bulb"><use href="#bulb"/></svg><svg class="lock"><use href="#lock"/></svg><i class="sw"></i><svg class="ball"><use href="#ball"/></svg><em>Conti...<svg><use href="#step"/></svg></em><svg class="dia"><use href="#dia"/></svg><em>Def...<svg><use href="#step"/></svg></em></div>
      <div class="row" style="--c:#aafdff"><span>1_S...</span><i class="radio"></i><svg class="bulb"><use href="#bulb"/></svg><svg class="lock"><use href="#lock"/></svg><i class="sw"></i><svg class="ball"><use href="#ball"/></svg><em>Conti...<svg><use href="#step"/></svg></em><svg class="dia"><use href="#dia"/></svg><em>Def...<svg><use href="#step"/></svg></em></div>
      <div class="row" style="--c:#aafdff"><span>1_S...</span><i class="radio"></i><svg class="bulb"><use href="#bulb"/></svg><svg class="lock"><use href="#lock"/></svg><i class="sw"></i><svg class="ball"><use href="#ball"/></svg><em>Conti...<svg><use href="#step"/></svg></em><svg class="dia"><use href="#dia"/></svg><em>Def...<svg><use href="#step"/></svg></em></div>
      <div class="row" style="--c:#aafdff"><span>1_S...</span><i class="radio"></i><svg class="bulb"><use href="#bulb"/></svg><svg class="lock"><use href="#lock"/></svg><i class="sw"></i><svg class="ball"><use href="#ball"/></svg><em>Conti...<svg><use href="#step"/></svg></em><svg class="dia"><use href="#dia"/></svg><em>Def...<svg><use href="#step"/></svg></em></div>
      <div class="row" style="--c:#f09837"><span>1_S...</span><i class="radio"></i><svg class="bulb"><use href="#bulb"/></svg><svg class="lock"><use href="#lock"/></svg><i class="sw"></i><svg class="ball"><use href="#ball"/></svg><em>Conti...<svg><use href="#step"/></svg></em><svg class="dia"><use href="#dia"/></svg><em>Def...<svg><use href="#step"/></svg></em></div>
      <div class="row" style="--c:#000"><span>1_A...</span><i class="radio"></i><svg class="bulb"><use href="#bulb"/></svg><svg class="lock"><use href="#lock"/></svg><i class="sw"></i><svg class="ball"><use href="#ball"/></svg><em>Conti...<svg><use href="#step"/></svg></em><svg class="dia"><use href="#dia"/></svg><em>Def...<svg><use href="#step"/></svg></em></div>
      <div class="row" style="--c:#f3b095"><span>1_S...</span><i class="radio"></i><svg class="bulb"><use href="#bulb"/></svg><svg class="lock"><use href="#lock"/></svg><i class="sw"></i><svg class="ball"><use href="#ball"/></svg><em>Conti...<svg><use href="#step"/></svg></em><svg class="dia"><use href="#dia"/></svg><em>Def...<svg><use href="#step"/></svg></em></div>
      <div class="row" style="--c:#aafdff"><span>1_S...</span><i class="radio"></i><svg class="bulb"><use href="#bulb"/></svg><svg class="lock"><use href="#lock"/></svg><i class="sw"></i><svg class="ball"><use href="#ball"/></svg><em>Conti...<svg><use href="#step"/></svg></em><svg class="dia"><use href="#dia"/></svg><em>Def...<svg><use href="#step"/></svg></em></div>
      <div class="row" style="--c:#ea3f24"><span>1_A...</span><i class="radio"></i><svg class="bulb"><use href="#bulb"/></svg><svg class="lock"><use href="#lock"/></svg><i class="sw"></i><svg class="ball"><use href="#ball"/></svg><em>Conti...<svg><use href="#step"/></svg></em><svg class="dia"><use href="#dia"/></svg><em>Def...<svg><use href="#step"/></svg></em></div>
    </div>
    <div class="foot">
      <div class="pm"><svg viewBox="0 0 46 32"><path d="M11 16h22M22 5v22" stroke="#333" stroke-width="2.200"/></svg><svg viewBox="0 0 40 32"><path d="M9 16h22" stroke="#bbb" stroke-width="2.200"/></svg></div>
      <div class="gear"><svg width="22" height="22" viewBox="0 0 22 22"><circle cx="11" cy="11" r="5.500" fill="none" stroke="#222" stroke-width="4.500"/><circle cx="11" cy="11" r="9" fill="none" stroke="#222" stroke-width="3.500" stroke-dasharray="3.500 3.560"/></svg><svg width="16" height="10" viewBox="0 0 16 10"><path d="M2 1.500l6 6 6-6" fill="none" stroke="#333" stroke-width="2.200"/></svg></div>
    </div>
    <div class="strip tabs"><svg><use href="#t-layers"/></svg><svg><use href="#t-mat"/></svg><svg><use href="#t-doc"/></svg><svg><use href="#t-cube"/></svg><svg><use href="#t-cam"/></svg><svg><use href="#t-grid"/></svg><svg><use href="#t-scroll"/></svg><svg><use href="#t-win"/></svg><svg><use href="#t-mon"/></svg><b class="on">?</b></div>
    <article class="help">
      <h1>Help topic not found</h1>
      <p>The link from Rhino did not find the command<br>name.</p>
      <p>This may be because of one of the following<br>reasons:</p>
      <ul><li>This topic has not yet been documented.</li><li>The topic is not linked to its command.</li></ul>
      <div class="get">
        <h3>To get help</h3>
        <ol><li>Try searching for the command name<br>using the <b>Search</b> box above.</li><li>Post questions about this command to<br><a>http://discourse.mcneel.com</a>.</li></ol>
      </div>
      <div class="see"><svg width="52" height="54" viewBox="0 0 52 54"><circle cx="26" cy="27" r="25" fill="url(#infog)" stroke="#5b8fd0" stroke-width="1.500"/><text x="17" y="42" font-family="Liberation Serif, serif" font-style="italic" font-weight="700" font-size="46" fill="#fff">i</text></svg><span>See also: <a>Command List</a></span></div>
      <h2>What do you want to do?</h2>
    </article>
  </aside>
</main>

<footer class="status">
  <svg width="28" height="22" viewBox="0 0 28 22"><path d="M0 2h28M0 8h28M0 14h28M0 20h28" stroke="#666" stroke-width="2"/></svg>
  <span class="s-cmd">Command: RunPythonScript</span>
  <span class="s-units">Units</span>
  <div class="s-plane">CPlane<svg width="14" height="22"><use href="#step"/></svg></div>
  <span class="s-x">X: 18'-3 7/16"</span><span class="s-y">Y: -66'-1 1/2"</span><span class="s-z">Z: 0"</span>
</footer>
</body>
</html>
```
FILE: styles.css
```css
* { box-sizing: border-box; }
html, body { margin: 0; height: 100%; }
body { width: 2878px; height: 1584px; overflow: hidden; display: flex; flex-direction: column; font-family: Inter, "Liberation Sans", sans-serif; font-size: 22px; color: #1f1f1f; background: #ebebeb; }
.defs { position: absolute; width: 0; height: 0; }
i, em { font-style: normal; }

.titlebar { height: 112px; flex: none; background: linear-gradient(#e9e7ea, #d0ced1); border-bottom: 2px solid #a8a8a8; display: flex; flex-direction: column; }
.title-row { height: 42px; display: grid; grid-template-columns: 420px 1fr 420px; align-items: center; }
.lights { display: flex; gap: 16px; padding-left: 14px; }
.lights i { width: 24px; height: 24px; border-radius: 50%; background: #cfcfcf; border: 1.5px solid #b4b4b4; }
.title { text-align: center; font-size: 26px; letter-spacing: -.2px; color: #333; padding-left: 22px; }
.title svg { margin-left: 10px; vertical-align: 3px; }
.tool-row { display: flex; align-items: center; height: 63px; padding: 0 29px 0 26px; }
.side-ico { width: 39px; height: 40px; border: 3px solid #0b52d2; flex: none; }
.side-ico.at-left { border-left-width: 12px; }
.side-ico.at-right { border-right-width: 12px; }
.modes { display: flex; gap: 19px; margin-left: 109px; font-size: 25px; font-weight: 600; letter-spacing: .05px; color: #464646; }
.modes span { padding: 0 22px; height: 30px; line-height: 30px; border-radius: 7px; }
.modes .on { background: #888; color: #fff; }
.layer-pick { display: flex; align-items: center; gap: 20px; margin-left: auto; margin-right: 592px; }
.layer-pick svg { position: relative; left: 1px; }
.pick { width: 386px; height: 37px; border-radius: 7px; background: linear-gradient(#fff, #f1f1f1); box-shadow: 0 1px 1px #999, 0 0 0 1px #ccc; display: flex; align-items: center; font-size: 22px; color: #444; }
.pick i { width: 28px; height: 28px; background: #000; margin-left: 10px; }
.pick span { flex: 1; text-align: center; padding-right: 7px; }

main { flex: 1; min-height: 0; display: grid; grid-template-columns: 320px 1960px 598px; }
.strip { height: 52px; flex: none; background: linear-gradient(#f9f9f9, #e0e0e0); border-bottom: 2px solid #cacaca; }

.panel-left { border-right: 2px solid #919191; display: flex; flex-direction: column; min-height: 0; overflow: hidden; }
.cmd { flex: none; margin: 21px 17px 0 15px; height: 42px; background: #fff; border: 1.5px solid #b2b2b2; color: #bfbfbf; font-size: 26px; line-height: 44px; padding-left: 6px; }
.tools { flex: none; margin-top: 21px; padding: 0 4px; height: 599px; display: grid; grid-template-columns: repeat(5, 48px); grid-auto-rows: 48px; gap: 12px; }
.tool { position: relative; }
.tool svg { width: 48px; height: 48px; display: block; fill: none; stroke: #000; stroke-width: 5; }
.tool.m::after { content: ""; position: absolute; left: 38px; top: 37px; border: 5px solid transparent; border-top: 11px solid #333; border-bottom: 0; }
.wheel { display: block; width: 37px; height: 37px; margin: 5px; border-radius: 50%; border: 2px solid #000; background: radial-gradient(circle, #ebebeb 9px, #000 9px, #000 9.500px, transparent 10px), conic-gradient(#f33, #fd3 16%, #6f6 33%, #5ff 50%, #22f 66%, #c3f 84%, #f33); }
.osnap { border-top: 3px solid #929292; flex: 1; min-height: 0; padding-top: 9px; overflow: hidden; }
.osnap label { display: flex; align-items: center; height: 36px; padding-left: 36px; font-size: 22px; }
.osnap .radio { margin-right: 8px; }
.checks { padding-top: 11px; }
.box { width: 24px; height: 24px; border-radius: 5px; background: #fff; border: 1.5px solid #b9b9b9; margin: 0 10px 0 2px; flex: none; }
.box.checked { background: #3f8ef5; border-color: #3f8ef5; }
.off { color: #b2b2b2; }
.off .box { background: #f4f4f4; border-color: #d0d0d0; }
.radio { width: 28px; height: 28px; border-radius: 50%; background: #fff; border: 1.5px solid #b9b9b9; display: block; flex: none; }
.radio.on { border: 10px solid #549af6; }

.center { border-right: 2px solid #8e8e8e; display: flex; flex-direction: column; min-width: 0; min-height: 0; }
.views { border-bottom-color: #7f7f7f; display: flex; align-items: center; padding: 0 22px 0 15px; font-size: 25px; letter-spacing: .1px; color: #4b4b4b; }
.v1 { margin-left: 24px; margin-right: 23px; }
.views span { border-left: 2px solid #999; padding: 0 41px 0 38.500px; height: 28px; line-height: 29px; }
.views .on { color: #2f7cf6; }
.views b { font-weight: 400; font-size: 24px; letter-spacing: 0; color: #222; margin-left: auto; }
.viewport { position: relative; flex: 1; background: #9ba2a9; overflow: hidden; }
.drawing { display: block; width: 1958px; height: 1368px; }
.drawing path { vector-effect: non-scaling-stroke; }
.cy, .or, .bl, .tx, .go, .ol, .ht, .rd, .gr, .bk { fill: none; stroke-width: 2; }
.cy { stroke: #80ffff; }
.or { stroke: #f99b7d; stroke-width: 1.600; }
.bl { stroke: #00f; }
.bk { stroke: #00f; stroke-width: 3; }
.tx { stroke: #00f; stroke-width: 6; stroke-dasharray: 1 3 1 2 1 5 1 2; stroke-opacity: .45; }
.go { stroke: #c8960c; stroke-width: 2.500; }
.ol { stroke: #7f9a40; }
.ht { stroke: #f00; stroke-width: 1; }
.rd { stroke: #f00; }
.gr { stroke: #74f08a; }
.ax { font-size: 22px; fill: #555; }
.vp-label { position: absolute; left: 2px; top: 2px; width: 160px; height: 40px; background: #2f5f8f; border: 2px solid #1f4f84; color: #fff; font-size: 24px; font-weight: 600; line-height: 39px; padding-left: 7px; letter-spacing: .15px; }

.dialog { position: absolute; left: 694px; top: 148px; width: 848px; height: 384px; border-radius: 10px; background: #ebebeb; box-shadow: 0 0 0 1px rgba(0,0,0,.28), 0 40px 80px rgba(0,0,0,.62); color: #000; font-size: 25px; }
.dlg-title { height: 44px; border-radius: 10px 10px 0 0; background: linear-gradient(#e9e7ea, #d1cfd2); border-bottom: 2px solid #b2b2b2; text-align: center; line-height: 46px; letter-spacing: .15px; }
.dlg-form { padding: 47px 0 0; display: grid; grid-template-columns: 163px 497px 1fr; column-gap: 13px; align-items: center; grid-template-rows: 42px 42px 40px; row-gap: 18px; }
.dlg-form > span { text-align: right; padding-top: 2px; }
.field { height: 42px; background: #fff; border: 1.5px solid #b5b5b5; padding-left: 5px; line-height: 44px; font-size: 26px; }
.focus { box-shadow: 0 0 0 7px #9fc1ef; border-radius: 1px; }
.field mark { background: #b4d5fe; color: inherit; padding: 2px 0; }
.disclose { margin-left: 7px; width: 39px; height: 39px; border-radius: 8px; background: #fff; box-shadow: 0 1px 1px #999, 0 0 0 1px #ccc; display: flex; align-items: center; justify-content: center; }
.popup { margin-left: -3px; height: 40px; border-radius: 8px; background: #fff; box-shadow: 0 1px 1px #999, 0 0 0 1px #ccc; display: flex; align-items: center; gap: 8px; padding-left: 17px; }
.popup i { margin-left: auto; width: 33px; height: 40px; border-radius: 0 8px 8px 0; background: linear-gradient(#6fb0f7, #2f7cf8); display: flex; align-items: center; justify-content: center; }
.dlg-btns { display: flex; justify-content: flex-end; gap: 15px; padding: 72px 21px 0 0; }
.dlg-btns button { width: 137px; height: 40px; border: 0; border-radius: 8px; background: #fff; box-shadow: 0 1px 1px #999, 0 0 0 1px #ccc; font: 25px/38px Inter, sans-serif; color: #222; padding: 0; }
.dlg-btns .pri { background: linear-gradient(#7db3f5, #2f7cf8); color: #fff; box-shadow: 0 1px 1px #1d63e8; }

.panel-right { display: flex; flex-direction: column; min-height: 0; background: #fff; overflow: hidden; }
.tabs { display: flex; padding: 4px 0 0 59px; }
.tabs svg { width: 48.100px; height: 40px; flex: none; fill: none; stroke: #555; stroke-width: 2; }
.defs symbol[id^="t-"] * { vector-effect: non-scaling-stroke; }
.tabs svg.on { stroke: #2f7cf6; }
.tabs b { width: 48px; text-align: center; font: 700 45px/42px "Open Sans", sans-serif; color: #4b4b4b; }
.tabs b.on { color: #2f7cf6; }
.thead, .row { display: grid; grid-template-columns: 101px 45px 46px 46px 60px 48px 114px 46px 92px; flex: none; }
.thead { height: 44px; border-bottom: 1.5px solid #ccc; color: #4b4b4b; padding: 3px 0 4px; font-size: 22px; letter-spacing: -.1px; }
.thead span { border-right: 2px solid #e0e0e0; line-height: 34px; padding-left: 9px; }
.thead span:last-child { border: 0; }
.rows { height: 547px; flex: none; overflow: hidden; }
.row { height: 34px; align-items: center; justify-items: center; color: #222; }
.row span { justify-self: start; padding-left: 38px; }
.row em { justify-self: stretch; padding: 2px 7px 0 13px; display: flex; align-items: center; justify-content: space-between; }
.row em svg { width: 14px; height: 22px; }
.bulb { width: 28px; height: 32px; }
.lock { width: 28px; height: 34px; }
.ball { width: 24px; height: 24px; }
.dia { width: 30px; height: 30px; }
.sw { width: 28px; height: 28px; background: var(--c); border: 2px solid #000; }
.first .bulb, .first .lock { opacity: .45; }
.foot { height: 69px; flex: none; background: #ebebeb; border-top: 2px solid #ccc; border-bottom: 3px solid #929292; display: flex; gap: 35px; padding: 13px 0 0 37px; }
.pm, .gear { height: 33px; border-radius: 7px; background: linear-gradient(#fff, #f3f3f3); box-shadow: 0 1px 1px #aaa, 0 0 0 1px #ccc; display: flex; align-items: center; }
.pm { width: 85px; }
.pm svg { height: 32px; width: 46px; }
.pm svg + svg { width: 40px; border-left: 1.5px solid #ccc; }
.gear { width: 69px; justify-content: space-between; padding: 0 6px 0 11px; }

.help { flex: 1; min-height: 0; overflow: hidden; padding: 20px 20px 0 20px; font: 26.400px/28px "Liberation Sans", Arial, sans-serif; color: #000; }
.help h1 { margin: 0 0 10px; font-size: 45.200px; line-height: 50px; height: 58px; border-bottom: 2px solid #bbb; letter-spacing: .25px; white-space: nowrap; }
.help p { margin: 0 0 10px; white-space: nowrap; }
.help ul { margin: 2px 0 22px; padding: 0; list-style: none; }
.help ul li { line-height: 32px; padding-left: 69px; position: relative; white-space: nowrap; }
.help ul li::before { content: ""; position: absolute; left: 33px; top: 9px; width: 14px; height: 14px; border-radius: 50%; background: #86170f; }
.get { background: #f4f4f4; border-radius: 10px; padding: 8px 20px 0; height: 184px; }
.get h3 { font-size: 25.600px; line-height: 29px; height: 30px; border-bottom: 2px solid #bbb; margin: 0 0 5px; }
.get ol { margin: 0; padding-left: 60px; line-height: 33px; list-style: none; counter-reset: step; white-space: nowrap; }
.get li { position: relative; counter-increment: step; }
.get li::before { content: counter(step) "."; position: absolute; left: -38px; }
.help a { font-style: italic; color: #0a1be8; }
.see { display: flex; align-items: center; gap: 17px; margin-top: 17px; padding-left: 11px; font-style: italic; }
.help h2 { margin: 54px 0 0; font-size: 40.200px; line-height: 46px; white-space: nowrap; }

.status { height: 52px; flex: none; background: linear-gradient(#d9d9d9, #cecece); display: flex; align-items: center; color: #000; padding-left: 7px; padding-top: 7px; font-size: 22px; }
.s-cmd { margin-left: 6px; width: 1876px; letter-spacing: .04px; }
.s-units { width: 87px; }
.s-plane { width: 139px; height: 32px; border: 1.5px solid #aaa; border-radius: 7px; display: flex; align-items: center; justify-content: space-between; padding: 0 8px 0 12px; margin-right: 29px; }
.s-x { width: 165px; }
.s-y { width: 169px; }
```
